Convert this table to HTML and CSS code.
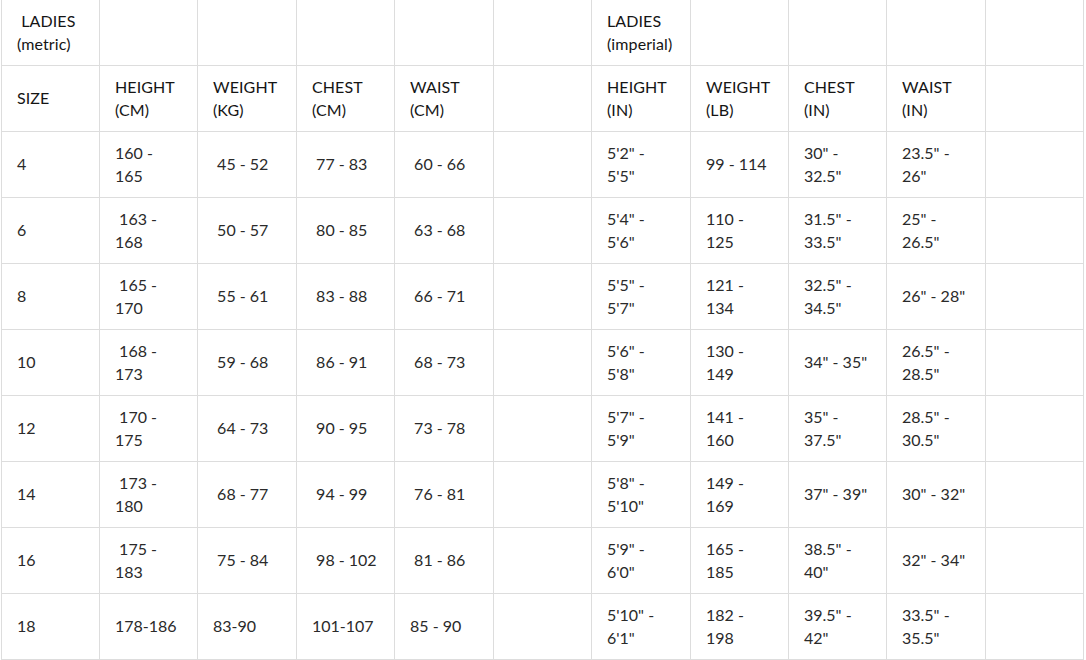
FILE: index.html
```html
<!DOCTYPE html>
<html lang="en">
<head>
<meta charset="utf-8">
<title>Ladies size chart</title>
<link rel="stylesheet" href="styles.css">
</head>
<body>
<div class="chart">
  <div class="cell head">&nbsp;LADIES (metric)</div>
  <div class="cell"></div>
  <div class="cell"></div>
  <div class="cell"></div>
  <div class="cell"></div>
  <div class="cell"></div>
  <div class="cell head">LADIES (imperial)</div>
  <div class="cell"></div>
  <div class="cell"></div>
  <div class="cell"></div>
  <div class="cell"></div>

  <div class="cell head">SIZE</div>
  <div class="cell head">HEIGHT (CM)</div>
  <div class="cell head">WEIGHT (KG)</div>
  <div class="cell head">CHEST (CM)</div>
  <div class="cell head">WAIST (CM)</div>
  <div class="cell"></div>
  <div class="cell head">HEIGHT (IN)</div>
  <div class="cell head">WEIGHT (LB)</div>
  <div class="cell head">CHEST (IN)</div>
  <div class="cell head">WAIST (IN)</div>
  <div class="cell"></div>

  <div class="cell">4</div>
  <div class="cell">160 - 165</div>
  <div class="cell">&nbsp;45 - 52</div>
  <div class="cell">&nbsp;77 - 83</div>
  <div class="cell">&nbsp;60 - 66</div>
  <div class="cell"></div>
  <div class="cell">5'2" - 5'5"</div>
  <div class="cell">99 - 114</div>
  <div class="cell">30" - 32.5"</div>
  <div class="cell">23.5" - 26"</div>
  <div class="cell"></div>

  <div class="cell">6</div>
  <div class="cell">&nbsp;163 - 168</div>
  <div class="cell">&nbsp;50 - 57</div>
  <div class="cell">&nbsp;80 - 85</div>
  <div class="cell">&nbsp;63 - 68</div>
  <div class="cell"></div>
  <div class="cell">5'4" - 5'6"</div>
  <div class="cell">110 - 125</div>
  <div class="cell">31.5" - 33.5"</div>
  <div class="cell">25" - 26.5"</div>
  <div class="cell"></div>

  <div class="cell">8</div>
  <div class="cell">&nbsp;165 - 170</div>
  <div class="cell">&nbsp;55 - 61</div>
  <div class="cell">&nbsp;83 - 88</div>
  <div class="cell">&nbsp;66 - 71</div>
  <div class="cell"></div>
  <div class="cell">5'5" - 5'7"</div>
  <div class="cell">121 - 134</div>
  <div class="cell">32.5" - 34.5"</div>
  <div class="cell">26" - 28"</div>
  <div class="cell"></div>

  <div class="cell">10</div>
  <div class="cell">&nbsp;168 - 173</div>
  <div class="cell">&nbsp;59 - 68</div>
  <div class="cell">&nbsp;86 - 91</div>
  <div class="cell">&nbsp;68 - 73</div>
  <div class="cell"></div>
  <div class="cell">5'6" - 5'8"</div>
  <div class="cell">130 - 149</div>
  <div class="cell">34" - 35"</div>
  <div class="cell">26.5" - 28.5"</div>
  <div class="cell"></div>

  <div class="cell">12</div>
  <div class="cell">&nbsp;170 - 175</div>
  <div class="cell">&nbsp;64 - 73</div>
  <div class="cell">&nbsp;90 - 95</div>
  <div class="cell">&nbsp;73 - 78</div>
  <div class="cell"></div>
  <div class="cell">5'7" - 5'9"</div>
  <div class="cell">141 - 160</div>
  <div class="cell">35" - 37.5"</div>
  <div class="cell">28.5" - 30.5"</div>
  <div class="cell"></div>

  <div class="cell">14</div>
  <div class="cell">&nbsp;173 - 180</div>
  <div class="cell">&nbsp;68 - 77</div>
  <div class="cell">&nbsp;94 - 99</div>
  <div class="cell">&nbsp;76 - 81</div>
  <div class="cell"></div>
  <div class="cell">5'8" - 5'10"</div>
  <div class="cell">149 - 169</div>
  <div class="cell">37" - 39"</div>
  <div class="cell">30" - 32"</div>
  <div class="cell"></div>

  <div class="cell">16</div>
  <div class="cell">&nbsp;175 - 183</div>
  <div class="cell">&nbsp;75 - 84</div>
  <div class="cell nowrap">&nbsp;98 - 102</div>
  <div class="cell">&nbsp;81 - 86</div>
  <div class="cell"></div>
  <div class="cell">5'9" - 6'0"</div>
  <div class="cell">165 - 185</div>
  <div class="cell">38.5" - 40"</div>
  <div class="cell">32" - 34"</div>
  <div class="cell"></div>

  <div class="cell">18</div>
  <div class="cell">178-186</div>
  <div class="cell">83-90</div>
  <div class="cell">101-107</div>
  <div class="cell">85 - 90</div>
  <div class="cell"></div>
  <div class="cell">5'10" - 6'1"</div>
  <div class="cell">182 - 198</div>
  <div class="cell">39.5" - 42"</div>
  <div class="cell">33.5" - 35.5"</div>
  <div class="cell"></div>
</div>
</body>
</html>
```
FILE: styles.css
```css
html, body {
  margin: 0;
  padding: 0;
  background: #ffffff;
}

body {
  font-family: Lato, "Open Sans", "Liberation Sans", sans-serif;
  color: #222222;
}

.chart {
  display: grid;
  grid-template-columns: 97px 97px 98px 97px 98px 97px 98px 97px 97px 98px 97px;
  grid-auto-rows: 65px;
  gap: 1px;
  padding: 1px;
  background: #dddddd;
  width: max-content;
  margin: -1px 0 0 1px;
}

.cell {
  background: #ffffff;
  display: flex;
  align-items: center;
  padding: 0 18px 2px 15px;
  font-size: 16px;
  line-height: 23px;
  color: #2a2a2a;
}

.head {
  color: #151515;
  letter-spacing: 0.1px;
}

.nowrap {
  white-space: nowrap;
}
```
